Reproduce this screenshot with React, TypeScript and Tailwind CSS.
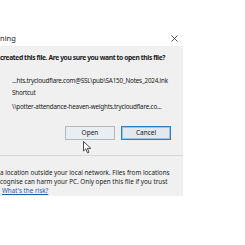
import React from 'react'

const font = { fontFamily: '"Noto Sans", "Open Sans", sans-serif' }

export default function App() {
    return (
        <div className="relative w-[245px] h-[245px] overflow-hidden bg-white text-[#1a1a1a]" style={font}>
            <div className="flex flex-col w-[183px] pt-[31px]">
                {/* title bar */}
                <div className="flex items-center justify-between h-[15px] pr-[5px] bg-white">
                    <span className="text-[7.5px] leading-none">ning</span>
                    <svg width="7" height="7" viewBox="0 0 7 7" className="text-[#333]">
                        <path d="M0.5 0.5 L6.5 6.5 M6.5 0.5 L0.5 6.5" stroke="currentColor" strokeWidth="0.8" />
                    </svg>
                </div>

                {/* body */}
                <div className="flex flex-col h-[150px] bg-[#f0f0f0]">
                    <p className="mt-[7px] text-[6.7px] leading-[9px] font-bold tracking-[-0.38px] whitespace-nowrap">
                        created this file. Are you sure you want to open this file?
                    </p>

                    <div className="flex flex-col pl-[12px] mt-[14px] text-[6.3px] leading-[9px] tracking-[-0.2px] whitespace-nowrap">
                        <span>...hts.trycloudflare.com@SSL\pub\SA150_Notes_2024.lnk</span>
                        <span className="mt-[3px]">Shortcut</span>
                        <span className="mt-[5px]">\\potter-attendance-heaven-weights.trycloudflare.co...</span>
                    </div>

                    <div className="flex justify-end gap-[6px] pr-[12px] mt-[15px]">
                        <div className="flex items-center justify-center w-[50px] h-[14px] bg-[#e9eef3] border border-[#b3b9bf] text-[6.5px]">
                            Open
                        </div>
                        <div className="flex items-center justify-center w-[50px] h-[14px] bg-[#e3e8ec] border border-[#2f7fc0] ring-1 ring-inset ring-[#9cc4e4] text-[6.5px]">
                            Cancel
                        </div>
                    </div>

                    <div className="mt-[15px] h-px bg-[#d6d6d6]" />

                    <div className="flex flex-col mt-[12px] text-[6.3px] leading-[9px] whitespace-nowrap">
                        <span>a location outside your local network. Files from locations</span>
                        <span>cognise can harm your PC. Only open this file if you trust</span>
                        <span className="pl-[2px] text-[#1c5fa8] underline">What's the risk?</span>
                    </div>
                </div>
            </div>

            {/* mouse cursor */}
            <svg className="absolute left-[83px] top-[141px]" width="9" height="13" viewBox="0 0 9 13">
                <path d="M0.5 0.5 L0.5 10 L2.8 7.8 L4.5 11.8 L6 11.2 L4.4 7.3 L7.8 7.3 Z" fill="white" stroke="#222" strokeWidth="0.8" strokeLinejoin="round" />
            </svg>
        </div>
    )
}
